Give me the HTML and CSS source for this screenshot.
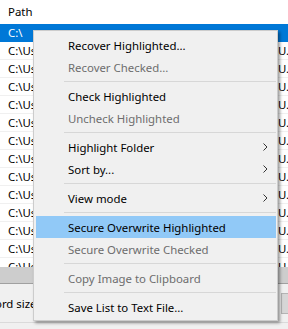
FILE: index.html
```html
<!DOCTYPE html>
<html>
	<head>
		<title>Recover</title>
		<link rel="stylesheet" href="styles.css">
	</head>
	<body>
		<div id="file_list">
			<div class="list_header">Path</div>
			<div class="list_row selected"><span class="cell_path">C:\</span><span class="cell_tail"></span></div>
			<div class="list_row"><span class="cell_path">C:\Users\Public</span><span class="cell_tail">U...</span></div>
			<div class="list_row"><span class="cell_path">C:\Users\Public</span><span class="cell_tail">U...</span></div>
			<div class="list_row"><span class="cell_path">C:\Users\Public</span><span class="cell_tail">U...</span></div>
			<div class="list_row"><span class="cell_path">C:\Users\Public</span><span class="cell_tail">U...</span></div>
			<div class="list_row"><span class="cell_path">C:\Users\Public</span><span class="cell_tail">U...</span></div>
			<div class="list_row"><span class="cell_path">C:\Users\Public</span><span class="cell_tail">U...</span></div>
			<div class="list_row"><span class="cell_path">C:\Users\Public</span><span class="cell_tail">U...</span></div>
			<div class="list_row"><span class="cell_path">C:\Users\Public</span><span class="cell_tail">U...</span></div>
			<div class="list_row"><span class="cell_path">C:\Users\Public</span><span class="cell_tail">U...</span></div>
			<div class="list_row"><span class="cell_path">C:\Users\Public</span><span class="cell_tail">U...</span></div>
			<div class="list_row"><span class="cell_path">C:\Users\Public</span><span class="cell_tail">U...</span></div>
			<div class="list_row"><span class="cell_path">C:\Users\Public</span><span class="cell_tail">U...</span></div>
			<div class="list_row"><span class="cell_path">C:\Users\Public</span><span class="cell_tail">U...</span></div>
		</div>
		<div id="h_scroll"></div>
		<div id="options_panel">
			<span class="options_label">ord size</span>
			<span class="options_button"></span>
		</div>
		<div id="status_strip"></div>

		<div id="context_menu">
			<div class="menu_item">Recover Highlighted...</div>
			<div class="menu_item disabled">Recover Checked...</div>
			<div class="menu_sep"></div>
			<div class="menu_item">Check Highlighted</div>
			<div class="menu_item disabled">Uncheck Highlighted</div>
			<div class="menu_sep"></div>
			<div class="menu_item">Highlight Folder<svg class="sub_arrow" width="5" height="8" viewBox="0 0 5 8"><path d="M0.5 0.5 L4 4 L0.5 7.5" fill="none" stroke="#333" stroke-width="1"/></svg></div>
			<div class="menu_item">Sort by...<svg class="sub_arrow" width="5" height="8" viewBox="0 0 5 8"><path d="M0.5 0.5 L4 4 L0.5 7.5" fill="none" stroke="#333" stroke-width="1"/></svg></div>
			<div class="menu_sep"></div>
			<div class="menu_item">View mode<svg class="sub_arrow" width="5" height="8" viewBox="0 0 5 8"><path d="M0.5 0.5 L4 4 L0.5 7.5" fill="none" stroke="#333" stroke-width="1"/></svg></div>
			<div class="menu_sep"></div>
			<div class="menu_item hover">Secure Overwrite Highlighted</div>
			<div class="menu_item disabled">Secure Overwrite Checked</div>
			<div class="menu_sep"></div>
			<div class="menu_item disabled">Copy Image to Clipboard</div>
			<div class="menu_sep"></div>
			<div class="menu_item">Save List to Text File...</div>
		</div>
	</body>
</html>
```
FILE: styles.css
```css
body
{
	margin:0;
	width:288px;
	height:329px;
	overflow:hidden;
	position:relative;
	font-family:"Noto Sans", "Open Sans", sans-serif;
	font-size:11.4px;
	color:#000;
	background:#f0f0f0;
}
/*=============================*/
#file_list
{
	height:267px;
	overflow:hidden;
	background:#fff;
}
.list_header
{
	height:24px;
	line-height:24px;
	padding-left:8px;
}
.list_row
{
	height:17px;
	line-height:17px;
	border-bottom:1px solid #f0f0f0;
	display:flex;
	white-space:nowrap;
}
.list_row.selected
{
	background:#0078d7;
	color:#fff;
	border-bottom-color:#0078d7;
}
.cell_path
{
	flex:0 0 270px;
	padding-left:8px;
	overflow:hidden;
}
.cell_tail
{
	flex:0 0 auto;
}
/*============================*/
#h_scroll
{
	height:16px;
	background:#cdcdcd;
	border-bottom:1px solid #a0a0a0;
}
#options_panel
{
	height:38px;
	display:flex;
	align-items:center;
	white-space:nowrap;
}
.options_label
{
	flex:0 0 281px;
	text-indent:-5px;
}
.options_button
{
	flex:0 0 30px;
	height:19px;
	background:#d6d6d6;
	border:1px solid #b4b4b4;
}
#status_strip
{
	height:6px;
	border-top:1px solid #dadada;
}
/*============================*/
#context_menu
{
	position:absolute;
	left:33px;
	top:30px;
	width:240px;
	padding:3px 1px 2px 2px;
	background:#f0f0f0;
	border:1px solid #cccccc;
	box-shadow:2px 2px 3px rgba(0,0,0,0.4);
}
.menu_item
{
	height:22px;
	padding-left:32px;
	padding-right:8px;
	display:flex;
	align-items:center;
	justify-content:space-between;
	white-space:nowrap;
}
.menu_item.disabled
{
	color:#6d6d6d;
}
.menu_item.hover
{
	background:#91c9f7;
}
.menu_sep
{
	height:1px;
	margin:3px 0 3px 28px;
	background:#d7d7d7;
}
```
